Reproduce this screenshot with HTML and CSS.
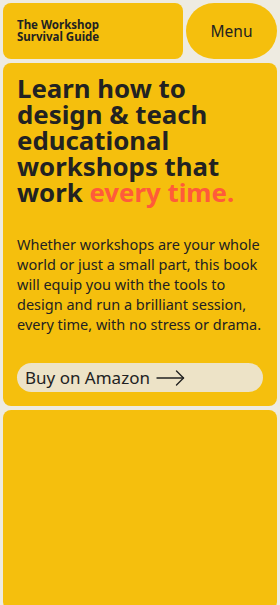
FILE: index.html
```html
<!DOCTYPE html>
<html lang="en">

<head>
    <meta charset="UTF-8">
    <title>The Workshop Survival Guide</title>
    <link rel="stylesheet" href="styles.css">
</head>

<body>
    <div class="page">
        <div class="topbar">
            <div class="brand">
                <h1>The Workshop<br>Survival Guide</h1>
            </div>
            <button class="menu">Menu</button>
        </div>

        <div class="card hero">
            <h2>Learn how to design &amp; teach educational workshops that work <span class="hl">every time.</span></h2>
            <p>Whether workshops are your whole world or just a small part, this book will equip you with the tools to design and run a brilliant session, every time, with no stress or drama.</p>
            <a class="buy" href="#">Buy on Amazon
                <svg width="29" height="16" viewBox="0 0 29 16" fill="none" stroke="#222" stroke-width="1.4" stroke-linecap="round" stroke-linejoin="round">
                    <path d="M1 8 H27.5" />
                    <path d="M20.5 1 L27.5 8 L20.5 15" />
                </svg>
            </a>
        </div>

        <div class="card empty"></div>
    </div>
</body>

</html>
```

FILE: styles.css
```css
* {
    margin: 0px;
    padding: 0px;
    box-sizing: border-box;
    font-family: "Noto Sans", sans-serif;
}

body {
    background-color: #eeebe1;
    color: #222;
}

.page {
    padding: 3px;
    display: flex;
    flex-direction: column;
    gap: 4px;
}

.topbar {
    display: flex;
    gap: 3px;
    height: 56px;
}

.brand {
    flex: 1;
    background-color: #f5bf0d;
    border-radius: 8px;
    display: flex;
    align-items: center;
    padding-left: 14px;
}

.brand h1 {
    font-size: 11.5px;
    line-height: 12px;
    font-weight: 700;
}

.menu {
    width: 91px;
    border: none;
    border-radius: 28px;
    background-color: #f5bf0d;
    color: #222;
    font-size: 15.5px;
    cursor: pointer;
}

.card {
    background-color: #f5bf0d;
    border-radius: 8px;
}

.hero {
    padding: 12px 14px 14px 14px;
}

.hero h2 {
    font-size: 25.8px;
    line-height: 26px;
    font-weight: 700;
}

.hl {
    color: #ff5b3a;
}

.hero p {
    margin-top: 29px;
    font-size: 14.5px;
    line-height: 20px;
}

.buy {
    margin-top: 29px;
    display: flex;
    align-items: center;
    gap: 6px;
    height: 29px;
    padding-left: 8px;
    background-color: #ede3c7;
    border-radius: 15px;
    color: #222;
    text-decoration: none;
    font-size: 17px;
}

.empty {
    height: 200px;
}
```
